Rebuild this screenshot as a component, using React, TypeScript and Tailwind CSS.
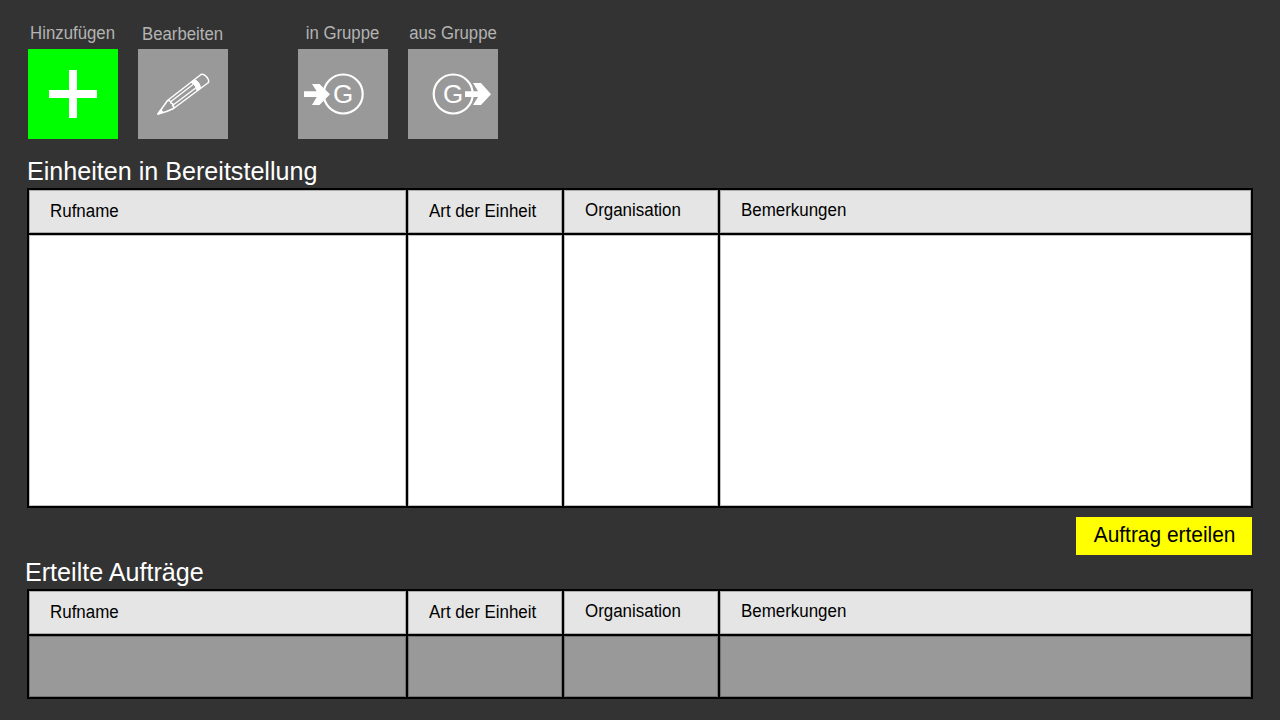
import React from "react";

type ActionProps = {
  label: string;
  labelClass: string;
  tileClass: string;
  children: React.ReactNode;
};

function Action({ label, labelClass, tileClass, children }: ActionProps) {
  return (
    <div className="flex w-[90px] flex-col items-center">
      <span className={`h-[26px] scale-x-[0.932] text-[18px] leading-[20px] whitespace-nowrap text-[#b3b3b3] ${labelClass}`}>
        {label}
      </span>
      <button aria-label={label} className={`block h-[90px] w-[90px] ${tileClass}`}>
        {children}
      </button>
    </div>
  );
}

function PlusIcon() {
  return (
    <svg viewBox="0 0 90 90" className="h-[90px] w-[90px]" fill="#fff">
      <path d="M41 21h8v20h20v8H49v20h-8V49H21v-8h20z" />
    </svg>
  );
}

function PencilIcon() {
  return (
    <svg viewBox="0 0 90 90" className="h-[90px] w-[90px]" fill="none" stroke="#fff" strokeWidth="1.5" strokeLinejoin="round">
      <path d="M20 65L29.500 51.500L63 25.500C65.500 24 71.500 29 70.500 33.500L35.500 59.500Q29 63 20 65Z" />
      <path d="M29.500 51.500C31.500 51.200 33 52.300 32.700 54C34.500 54 35.500 55.200 34.500 56.500C36 57.200 36.200 58.300 35.500 59.500" />
      <path d="M32 53.300L55 35.500M34.500 56.500L58 38.800" strokeWidth="1.300" />
      <path d="M53 33.200L56.500 30.500C59.500 31.500 62.500 35.500 62.500 39.300L59 41.900C58.500 38.500 56.500 35 53 33.200Z" fill="#fff" strokeWidth="1" />
      <path d="M20 65L22.800 61L24.800 63.400Z" fill="#fff" />
    </svg>
  );
}

function GroupIcon({ arrow }: { arrow: string }) {
  return (
    <svg viewBox="0 0 90 90" className="h-[90px] w-[90px]" fill="#fff">
      <circle cx="45.200" cy="45" r="19.500" fill="none" stroke="#fff" strokeWidth="2.200" />
      <text x="45.200" y="54" fontSize="26" textAnchor="middle">G</text>
      <path d={arrow} />
    </svg>
  );
}

const columns = [
  { title: "Rufname", offset: "pt-[11px]" },
  { title: "Art der Einheit", offset: "pt-[11px]" },
  { title: "Organisation", offset: "pt-[10px]" },
  { title: "Bemerkungen", offset: "pt-[10px]" },
];

function UnitTable({ className, cellClass }: { className: string; cellClass: string }) {
  return (
    <div className={`ml-[27px] grid w-[1226px] grid-cols-[377px_154px_154px_1fr] gap-[2px] bg-black p-[2px] ${className}`}>
      {columns.map((c) => (
        <div key={c.title} className={`bg-[#e5e5e5] pl-[21px] text-[18px] leading-[20px] text-black shadow-[inset_0_0_0_1px_rgba(0,0,0,0.25)] ${c.offset}`}>
          <span className="inline-block origin-left scale-x-[0.94] whitespace-nowrap">{c.title}</span>
        </div>
      ))}
      {columns.map((c) => (
        <div key={c.title} className={`shadow-[inset_0_0_0_1px_rgba(0,0,0,0.25)] ${cellClass}`} />
      ))}
    </div>
  );
}

export default function App() {
  return (
    <main className="flex h-[720px] w-[1280px] flex-col overflow-hidden bg-[#333] font-['Liberation_Sans',Arial,sans-serif]">
      <div className="flex gap-[20px] pt-[23px] pl-[28px]">
        <Action label="Hinzufügen" labelClass="" tileClass="bg-[#0f0]">
          <PlusIcon />
        </Action>
        <Action label="Bearbeiten" labelClass="pt-px" tileClass="bg-[#999]">
          <PencilIcon />
        </Action>
        <div className="w-[30px]" />
        <Action label="in Gruppe" labelClass="" tileClass="bg-[#999]">
          <GroupIcon arrow="M6 42.300H18.700L14 35H21.500L32 45.300L21.500 56H14L18.700 48H6Z" />
        </Action>
        <Action label="aus Gruppe" labelClass="" tileClass="bg-[#999]">
          <GroupIcon arrow="M57 42.300H70L65 34H73L83 45.300L73 56H65L70 48H57Z" />
        </Action>
      </div>
      <h1 className="mt-[17px] ml-[27px] h-[32px] origin-left scale-x-[0.985] self-start text-[25.5px] leading-[30px] text-white">
        Einheiten in Bereitstellung
      </h1>
      <UnitTable className="h-[320px] grid-rows-[43px_1fr]" cellClass="bg-white" />
      <button className="mt-[9px] mr-[28px] flex h-[38px] w-[176px] justify-center self-end bg-[#ff0] text-[22px] leading-[36px] text-black">
        <span className="ml-px scale-x-[0.95] whitespace-nowrap">Auftrag erteilen</span>
      </button>
      <h2 className="mt-[2px] ml-[25px] h-[32px] origin-left scale-x-[0.985] self-start text-[25.5px] leading-[30px] text-white">
        Erteilte Aufträge
      </h2>
      <UnitTable className="h-[110px] grid-rows-[43px_1fr]" cellClass="bg-[#999]" />
    </main>
  );
}
